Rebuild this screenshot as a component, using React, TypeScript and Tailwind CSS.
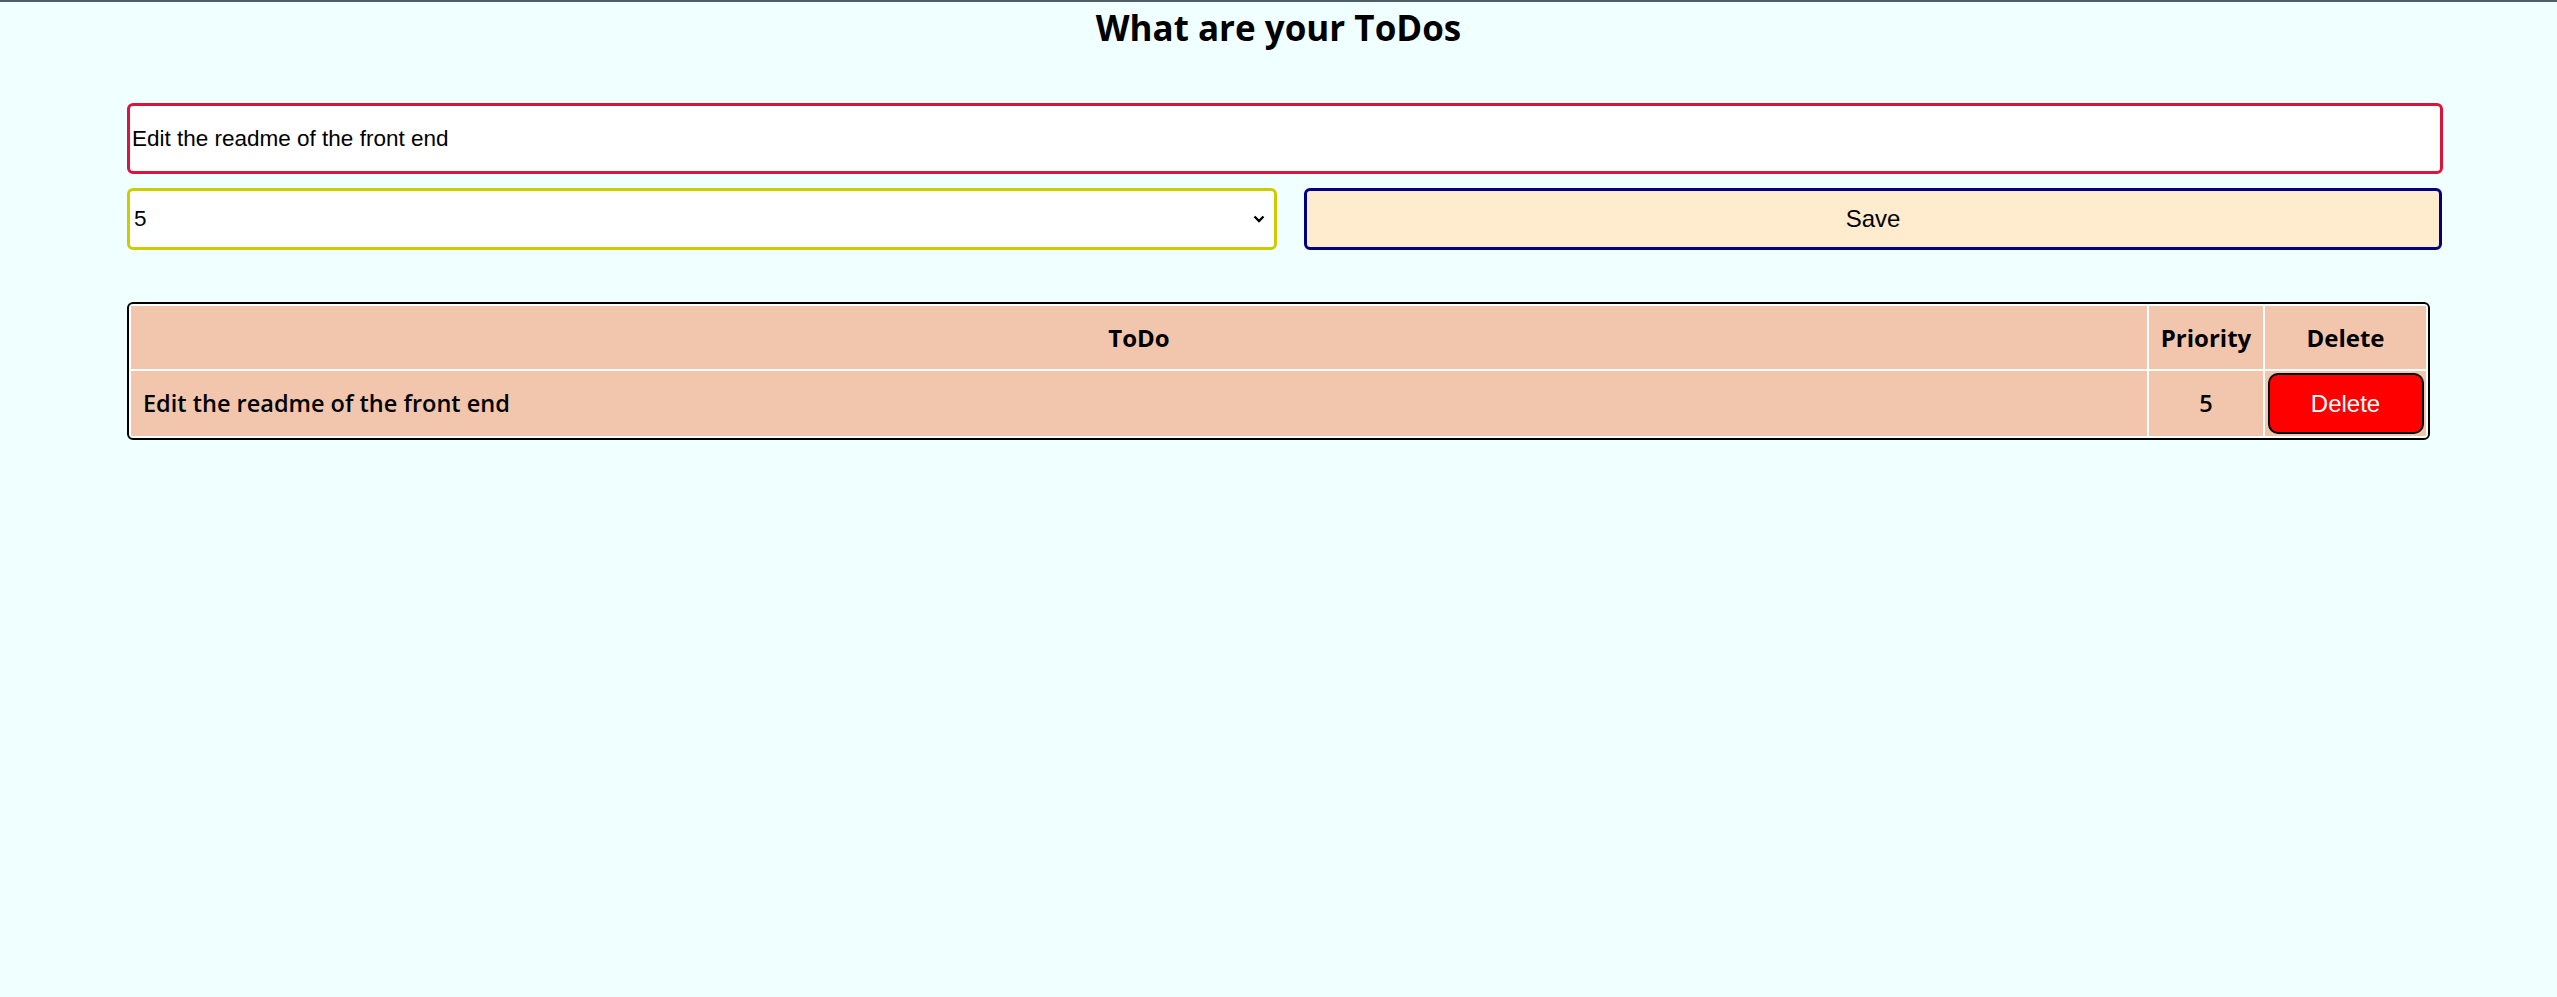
import React from "react";

export default function App() {
  const todos = [{ text: "Edit the readme of the front end", priority: 5 }];
  return (
    <div className="h-screen overflow-hidden bg-[#f0ffff] font-['Open_Sans',sans-serif] text-black">
      <div className="h-[2px] bg-[#4d5f68]" />
      <h2 className="text-center font-bold text-[35px] leading-[44px] pt-[4px]">What are your ToDos</h2>
      <div className="ml-[127px] mt-[53px]">
        <input
          readOnly
          value="Edit the readme of the front end"
          className="block w-[2316px] h-[71px] border-[3px] border-[#dc143c] rounded-[6px] bg-white px-[2px] text-[22.5px] font-['Liberation_Sans',Arial,sans-serif] text-black outline-none"
        />
        <div className="flex mt-[14px]">
          <div className="relative w-[1150px] h-[62px]">
            <select
              defaultValue="5"
              className="appearance-none w-full h-full border-[3px] border-[#cccc00] rounded-[6px] bg-white pl-[4px] text-[22.5px] font-['Liberation_Sans',Arial,sans-serif] text-black outline-none"
            >
              <option value="1">1</option>
              <option value="2">2</option>
              <option value="3">3</option>
              <option value="4">4</option>
              <option value="5">5</option>
            </select>
            <svg
              className="absolute right-[12px] top-1/2 -translate-y-1/2 pointer-events-none"
              width="12"
              height="8"
              viewBox="0 0 12 8"
            >
              <path d="M1.5 1.5 L6 6 L10.5 1.5" fill="none" stroke="#000" strokeWidth="2.4" />
            </svg>
          </div>
          <button className="ml-[27px] w-[1138px] h-[62px] border-[3px] border-[#000080] rounded-[6px] bg-[#ffebcd] text-[24px] font-['Liberation_Sans',Arial,sans-serif] text-black">
            Save
          </button>
        </div>
        <table className="mt-[52px] w-[2303px] table-fixed border-separate border-spacing-[2px] border-2 border-black rounded-[6px] bg-white text-[24px]">
          <colgroup>
            <col className="w-[2016px]" />
            <col className="w-[114px]" />
            <col className="w-[161px]" />
          </colgroup>
          <thead>
            <tr>
              <th className="h-[63px] p-0 bg-[#f2c6ac] font-bold text-center">ToDo</th>
              <th className="h-[63px] p-0 bg-[#f2c6ac] font-bold text-center">Priority</th>
              <th className="h-[63px] p-0 bg-[#f2c6ac] font-bold text-center">Delete</th>
            </tr>
          </thead>
          <tbody>
            {todos.map((t) => (
              <tr key={t.text}>
                <td className="h-[65px] py-0 pl-[12px] bg-[#f2c6ac] font-semibold text-left text-[23.5px]">{t.text}</td>
                <td className="h-[65px] p-0 bg-[#f2c6ac] font-semibold text-center text-[23.5px]">{t.priority}</td>
                <td className="h-[65px] p-[2px] bg-[#f2c6ac] text-center">
                  <button className="w-[156px] h-[61px] bg-[#ff0000] border-2 border-black rounded-[10px] text-white text-[24px] font-['Liberation_Sans',Arial,sans-serif]">
                    Delete
                  </button>
                </td>
              </tr>
            ))}
          </tbody>
        </table>
      </div>
    </div>
  );
}
